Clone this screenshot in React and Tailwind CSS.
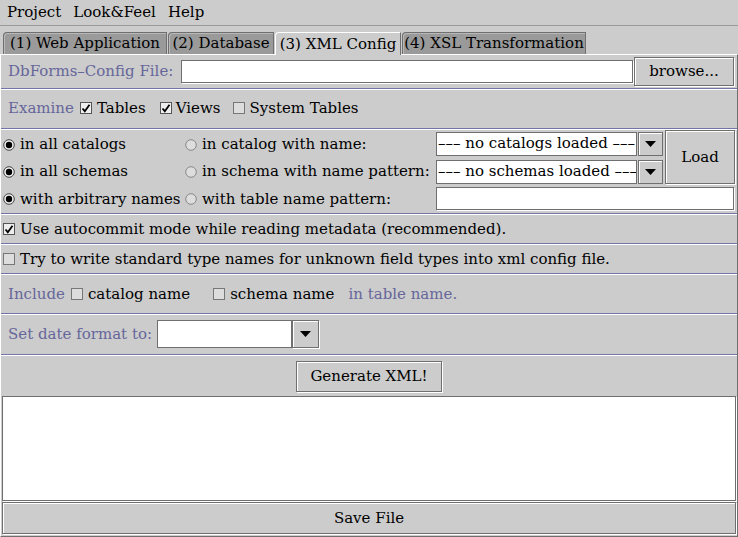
import React from "react";

function Check({ checked }) {
  return (
    <svg width="12" height="12" viewBox="0 0 12 12" className="shrink-0">
      <rect x="0.5" y="0.5" width="11" height="11" fill={checked ? "#eeeeee" : "#dddddd"} stroke={checked ? "#555555" : "#777777"} />
      {checked && <path d="M2.5 6.5 L4.8 9.2 L9.5 2.8" fill="none" stroke="#000" strokeWidth="1.8" />}
    </svg>
  );
}

function Radio({ checked }) {
  return (
    <svg width="12" height="12" viewBox="0 0 12 12" className="shrink-0">
      <circle cx="6" cy="6" r="5.3" fill={checked ? "#eeeeee" : "#dddddd"} stroke={checked ? "#444444" : "#888888"} />
      {checked && <circle cx="6" cy="6" r="3.2" fill="#000" />}
    </svg>
  );
}

function Arrow() {
  return (
    <svg width="11" height="6" viewBox="0 0 11 6">
      <path d="M0 0 H11 L5.5 6 Z" fill="#000" />
    </svg>
  );
}

function Sep() {
  return (
    <div className="flex flex-col">
      <div className="h-px bg-[#7474a8]" />
      <div className="h-px bg-white" />
    </div>
  );
}

function Combo({ text, w, fieldW }) {
  return (
    <div className={`flex h-[24px] ${w}`}>
      <div className={`${fieldW} h-full bg-white border border-[#6f6f6f] overflow-hidden whitespace-nowrap pl-[1px] leading-[21px]`}>
        {text}
      </div>
      <div className="flex-1 h-full border border-[#6f6f6f] shadow-[inset_1px_1px_0_#fff] ml-[1px] flex items-center justify-center bg-[#cccccc]">
        <Arrow />
      </div>
    </div>
  );
}

function Field({ className }) {
  return <div className={`bg-white border border-[#6f6f6f] shadow-[1px_1px_0_#fff] ${className}`} />;
}

function Button({ children, className }) {
  return (
    <div className={`bg-[#cccccc] border border-[#6f6f6f] shadow-[inset_1px_1px_0_#fff,1px_1px_0_#fff] flex items-center justify-center ${className}`}>
      {children}
    </div>
  );
}

const LBL = "text-[#66669a]";
const TAB = "h-[22px] bg-[#9a9a9a] border-t border-l border-r border-[#6f6f6f] shadow-[inset_1px_1px_0_#b8b8b8] rounded-tl-[4px] flex items-center justify-center whitespace-nowrap";

export default function App() {
  return (
    <div className="font-['DejaVu_Serif']">
    <div className="w-[738px] h-[537px] bg-[#cccccc] text-[15px] text-black flex flex-col overflow-hidden leading-none">
      {/* menubar */}
      <div className="h-[26px] flex items-center gap-[12px] pl-[7px] border-b border-[#9a9a9a] shrink-0">
        <span>Project</span>
        <span>Look&amp;Feel</span>
        <span>Help</span>
      </div>
      {/* tabs */}
      <div className="h-[28px] flex items-end pl-[3px] shrink-0">
        <div className={`${TAB} w-[164px]`}>(1) Web Application</div>
        <div className={`${TAB} w-[106px] ml-[1px]`}>(2) Database</div>
        <div className="w-[126px] h-[23px] ml-[1px] bg-[#cccccc] border-t border-l border-white border-r border-r-[#6f6f6f] rounded-tl-[4px] flex items-center justify-center whitespace-nowrap mb-[-1px] relative z-10">(3) XML Config</div>
        <div className={`${TAB} w-[184px] ml-[1px]`}>(4) XSL Transformation</div>
      </div>
      {/* panel */}
      <div className="flex-1 flex flex-col border-t border-white border-l border-l-white border-r border-r-[#6f6f6f] border-b border-b-[#6f6f6f]">
        {/* config file row */}
        <div className="h-[33px] flex items-center pl-[7px] pr-[2px]">
          <span className={`${LBL} w-[173px]`}>DbForms–Config File:</span>
          <Field className="w-[452px] h-[23px] mb-[1px]" />
          <Button className="w-[100px] h-[29px] ml-[1px]">browse...</Button>
        </div>
        <Sep />
        {/* examine */}
        <div className="h-[38px] flex items-center pl-[7px] pb-[2px]">
          <span className={LBL}>Examine</span>
          <span className="ml-[6px] flex items-center gap-[5px]"><Check checked />Tables</span>
          <span className="ml-[14px] flex items-center gap-[4px]"><Check checked />Views</span>
          <span className="ml-[13px] flex items-center gap-[4px]"><Check />System Tables</span>
        </div>
        <Sep />
        {/* grid */}
        <div className="h-[83px] flex pl-[2px] pr-[2px]">
          <div className="w-[182px] flex flex-col pt-[1px]">
            <div className="h-[28px] flex items-center gap-[5px]"><Radio checked />in all catalogs</div>
            <div className="h-[28px] flex items-center gap-[5px]"><Radio checked />in all schemas</div>
            <div className="h-[28px] flex items-center gap-[5px] whitespace-nowrap"><Radio checked />with arbitrary names</div>
          </div>
          <div className="w-[251px] flex flex-col pt-[1px]">
            <div className="h-[28px] flex items-center gap-[5px]"><Radio />in catalog with name:</div>
            <div className="h-[28px] flex items-center gap-[5px] whitespace-nowrap"><Radio />in schema with name pattern:</div>
            <div className="h-[28px] flex items-center gap-[5px]"><Radio />with table name pattern:</div>
          </div>
          <div className="flex-1 flex flex-col">
            <div className="flex gap-[2px]">
              <div className="flex flex-col gap-[4px] pt-[2px]">
                <Combo text="––– no catalogs loaded –––" w="w-[227px]" fieldW="w-[201px]" />
                <Combo text="––– no schemas loaded –––" w="w-[227px]" fieldW="w-[201px]" />
              </div>
              <Button className="flex-1 h-[54px]">Load</Button>
            </div>
            <Field className="h-[23px] mt-[3px] mr-[1px]" />
          </div>
        </div>
        <Sep />
        <div className="h-[28px] flex items-center gap-[5px] pl-[2px]"><Check checked />Use autocommit mode while reading metadata (recommended).</div>
        <Sep />
        <div className="h-[28px] flex items-center gap-[5px] pl-[2px]"><Check />Try to write standard type names for unknown field types into xml config file.</div>
        <Sep />
        <div className="h-[38px] flex items-center pl-[7px]">
          <span className={LBL}>Include</span>
          <span className="ml-[6px] flex items-center gap-[5px]"><Check />catalog name</span>
          <span className="ml-[23px] flex items-center gap-[5px]"><Check />schema name</span>
          <span className={`${LBL} ml-[14px]`}>in table name.</span>
        </div>
        <Sep />
        <div className="h-[39px] flex items-center pl-[7px]">
          <span className={`${LBL} w-[149px]`}>Set date format to:</span>
          <div className="flex h-[28px] mb-[1px]">
            <div className="w-[135px] h-full bg-white border border-[#6f6f6f]" />
            <div className="w-[27px] h-full border border-[#6f6f6f] shadow-[inset_1px_1px_0_#fff,1px_1px_0_#fff] flex items-center justify-center">
              <Arrow />
            </div>
          </div>
        </div>
        <Sep />
        <div className="h-[40px] flex items-center justify-center">
          <Button className="w-[146px] h-[31px]">Generate XML!</Button>
        </div>
        <div className="mx-[1px] h-[105px] bg-white border border-[#6f6f6f] shadow-[1px_1px_0_#fff]" />
        <Button className="mx-[1px] mt-[1px] h-[32px]">Save File</Button>
        <div className="flex-1" />
      </div>
    </div>
    </div>
  );
}
